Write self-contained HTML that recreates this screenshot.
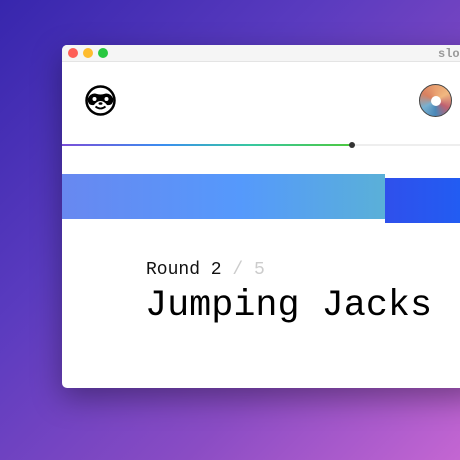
<!DOCTYPE html>
<html><head><style>
*{margin:0;padding:0;box-sizing:border-box}
body{width:460px;height:460px;overflow:hidden;position:relative;background:linear-gradient(135deg,#3726ad 0%,#5a3bbf 35%,#8a4cc4 70%,#c466d2 100%);font-family:"Liberation Mono",monospace}
.win{position:absolute;left:62px;top:45px;width:420px;height:343px;background:#fff;border-radius:5px;overflow:hidden;box-shadow:0 10px 30px rgba(0,0,0,.35)}
.tb{height:17px;background:#f5f5f5;border-bottom:1px solid #e4e4e4;position:relative}
.d{position:absolute;top:3px;width:10px;height:10px;border-radius:50%}
.t{position:absolute;left:376px;top:2px;font-size:12px;color:#999;font-weight:bold}
</style></head><body>
<div class="win">
<div class="tb"><div class="d" style="left:6px;background:#fe5f57"></div><div class="d" style="left:21px;background:#febc2e"></div><div class="d" style="left:36px;background:#28c840"></div><div class="t">slot</div></div>
<svg style="position:absolute;left:23px;top:40px" width="31" height="31" viewBox="0 0 31 31">
<circle cx="15.5" cy="15.5" r="14" fill="#fff" stroke="#000" stroke-width="2.5"/>
<path d="M2.5 14 Q6 7 12 9 Q15.5 10 19 9 Q25 7 28.5 14 Q28 21 22 20 Q19 16 15.5 16 Q12 16 9 20 Q3 21 2.5 14Z" fill="#000"/>
<circle cx="9.5" cy="14" r="2" fill="#fff"/><circle cx="21.5" cy="14" r="2" fill="#fff"/>
<ellipse cx="15.5" cy="18.5" rx="2" ry="1.3" fill="#000"/>
<path d="M10.5 21.5 Q15.5 25.5 20.5 21.5" fill="none" stroke="#000" stroke-width="1.8"/>
</svg>
<div style="position:absolute;left:357px;top:39px;width:33px;height:33px;border-radius:50%;border:1px solid #444;background:conic-gradient(#e9a070,#f0b880,#c06070,#4a88b8,#78b0d0,#d88060,#e9a070)"><div style="position:absolute;left:11px;top:11px;width:10px;height:10px;border-radius:50%;background:#fff"></div></div>
<div style="position:absolute;left:0;top:99px;width:420px;height:2px;background:#eee"></div>
<div style="position:absolute;left:0;top:99px;width:290px;height:2px;background:linear-gradient(90deg,#7a4fd8,#3a8ef0 35%,#38c8a0 65%,#4ec840)"></div>
<div style="position:absolute;left:287px;top:97px;width:6px;height:6px;border-radius:50%;background:#333"></div>
<div style="position:absolute;left:0;top:129px;width:323px;height:45px;background:linear-gradient(90deg,#6888f0,#5599fc 55%,#5ab0d8)"></div>
<div style="position:absolute;left:323px;top:133px;width:100px;height:45px;background:linear-gradient(90deg,#2f50ec,#1e60f4)"></div>
<div style="position:absolute;left:84px;top:215px;font-size:18px;color:#111;white-space:pre">Round 2 <span style="color:#ccc">/ 5</span></div>
<div style="position:absolute;left:83px;top:240px;font-size:36.8px;color:#000;white-space:pre">Jumping Jacks</div>
</div>
</body></html>
